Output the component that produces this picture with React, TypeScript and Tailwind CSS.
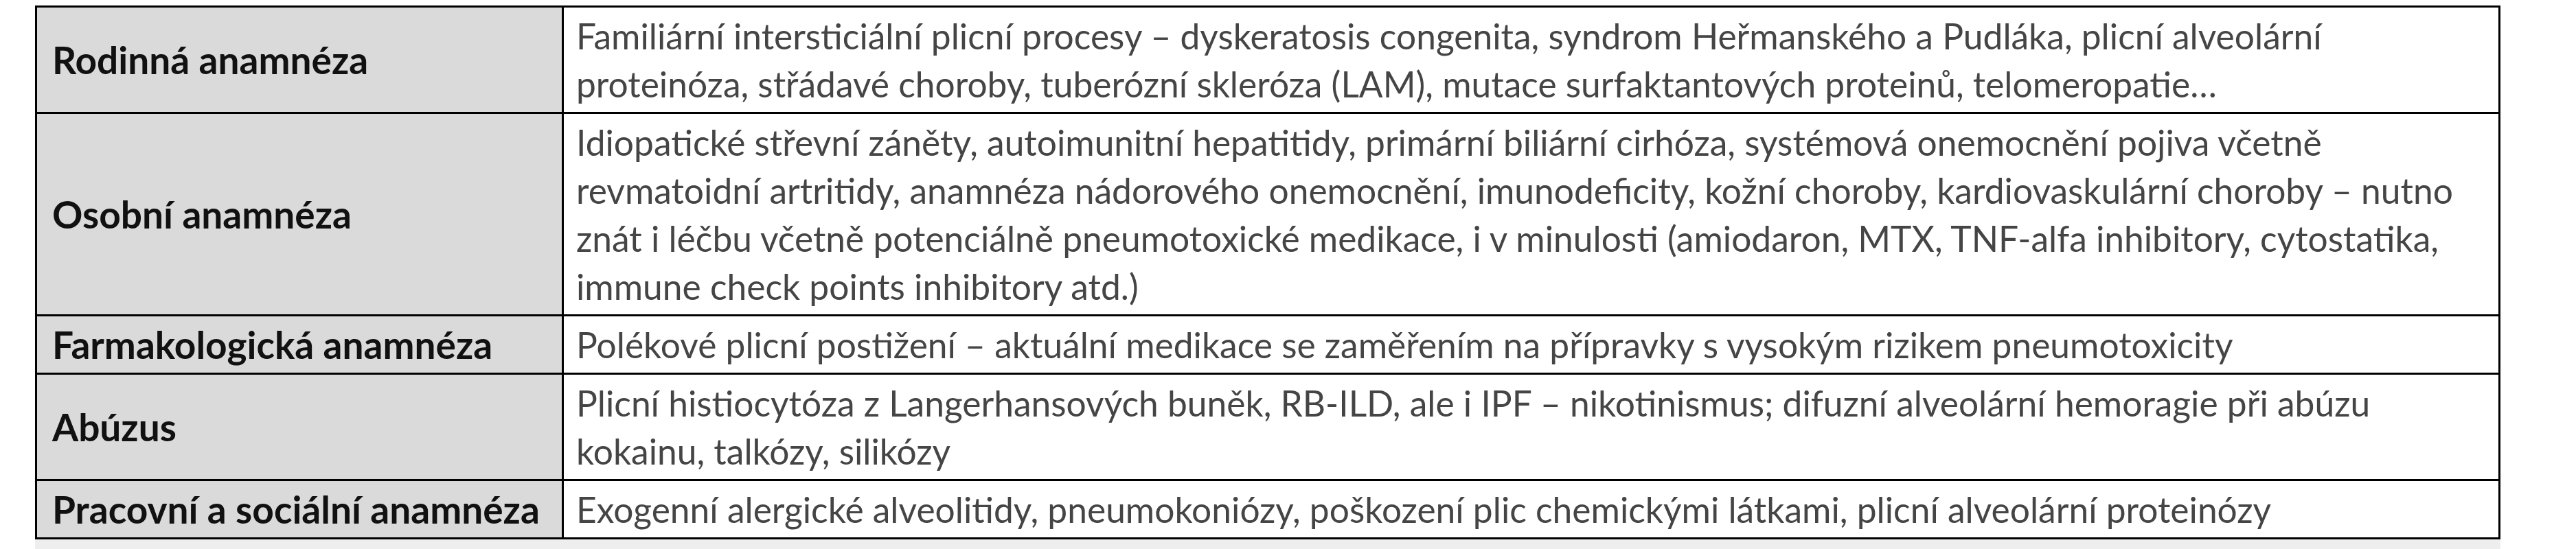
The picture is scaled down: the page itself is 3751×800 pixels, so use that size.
import React from 'react';

type Row = { label: string; lines: string[] };

const rows: Row[] = [
  {
    label: 'Rodinná anamnéza',
    lines: [
      'Familiární intersticiální plicní procesy – dyskeratosis congenita, syndrom Heřmanského a Pudláka, plicní alveolární',
      'proteinóza, střádavé choroby, tuberózní skleróza (LAM), mutace surfaktantových proteinů, telomeropatie…',
    ],
  },
  {
    label: 'Osobní anamnéza',
    lines: [
      'Idiopatické střevní záněty, autoimunitní hepatitidy, primární biliární cirhóza, systémová onemocnění pojiva včetně',
      'revmatoidní artritidy, anamnéza nádorového onemocnění, imunodeficity, kožní choroby, kardiovaskulární choroby – nutno',
      'znát i léčbu včetně potenciálně pneumotoxické medikace, i v minulosti (amiodaron, MTX, TNF-alfa inhibitory, cytostatika,',
      'immune check points inhibitory atd.)',
    ],
  },
  {
    label: 'Farmakologická anamnéza',
    lines: [
      'Polékové plicní postižení – aktuální medikace se zaměřením na přípravky s vysokým rizikem pneumotoxicity',
    ],
  },
  {
    label: 'Abúzus',
    lines: [
      'Plicní histiocytóza z Langerhansových buněk, RB-ILD, ale i IPF – nikotinismus; difuzní alveolární hemoragie při abúzu',
      'kokainu, talkózy, silikózy',
    ],
  },
  {
    label: 'Pracovní a sociální anamnéza',
    lines: [
      'Exogenní alergické alveolitidy, pneumokoniózy, poškození plic chemickými látkami, plicní alveolární proteinózy',
    ],
  },
];

export default function App() {
  return (
    <div className="min-h-[800px] w-[3751px] bg-white pt-[8px] pl-[51px]">
      <div className="w-[3590px]">
        <table className="w-full border-collapse border-[3px] border-black font-['Lato','Liberation_Sans',sans-serif]">
          <tbody>
            {rows.map((row) => (
              <tr key={row.label}>
                <td className="w-[767px] border-[3px] border-black bg-[#dadada] pl-[22px] align-middle text-[55px] leading-[70px] font-bold whitespace-nowrap text-[#111111]">
                  {row.label}
                </td>
                <td className="border-[3px] border-black bg-white py-[6px] pl-[18px] align-middle text-[51.5px] leading-[70px] text-[#454545] whitespace-nowrap">
                  {row.lines.map((line, i) => (
                    <div key={i}>{line}</div>
                  ))}
                </td>
              </tr>
            ))}
          </tbody>
        </table>
        <div className="h-[17px] bg-[#eeeeee]" />
      </div>
    </div>
  );
}
